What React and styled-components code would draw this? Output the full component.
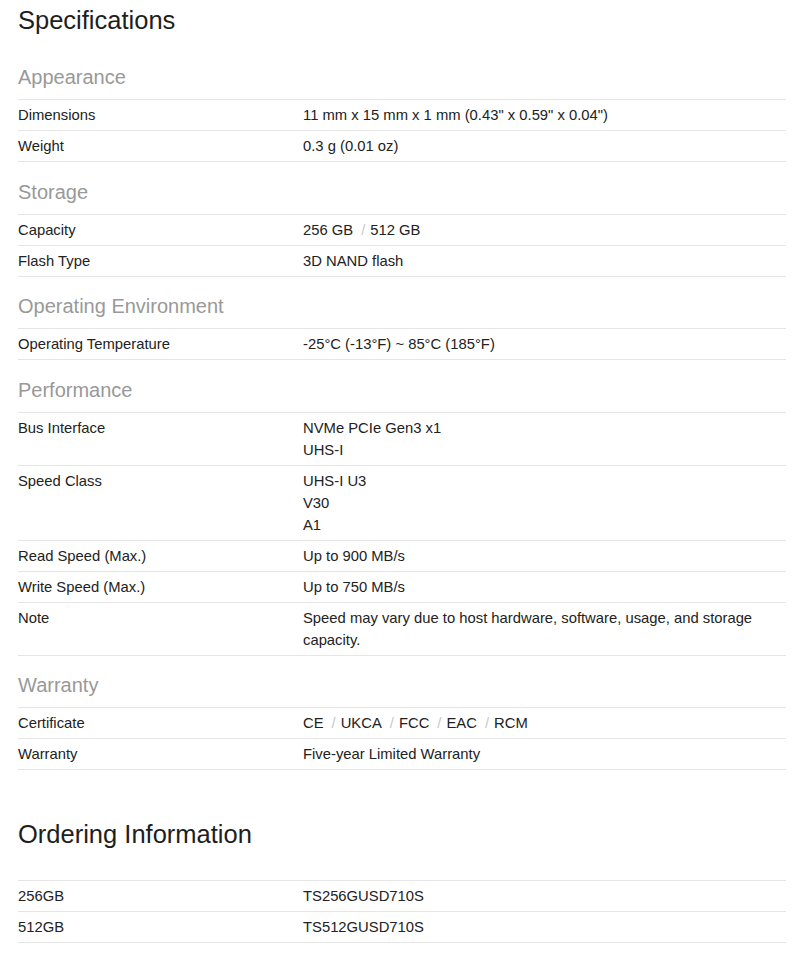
import React from "react";
import styled, { createGlobalStyle } from "styled-components";

const GlobalStyle = createGlobalStyle`
  body {
    margin: 0;
    background: #fff;
    font-family: "Liberation Sans", Arial, sans-serif;
    color: #222;
  }
`;

const specs = [
  {
    title: "Appearance",
    rows: [
      ["Dimensions", ['11 mm x 15 mm x 1 mm (0.43" x 0.59" x 0.04")']],
      ["Weight", ["0.3 g (0.01 oz)"]],
    ],
  },
  {
    title: "Storage",
    rows: [
      ["Capacity", [["256 GB", "512 GB"]]],
      ["Flash Type", ["3D NAND flash"]],
    ],
  },
  {
    title: "Operating Environment",
    rows: [["Operating Temperature", ["-25°C (-13°F) ~ 85°C (185°F)"]]],
  },
  {
    title: "Performance",
    rows: [
      ["Bus Interface", ["NVMe PCIe Gen3 x1", "UHS-I"]],
      ["Speed Class", ["UHS-I U3", "V30", "A1"]],
      ["Read Speed (Max.)", ["Up to 900 MB/s"]],
      ["Write Speed (Max.)", ["Up to 750 MB/s"]],
      [
        "Note",
        ["Speed may vary due to host hardware, software, usage, and storage capacity."],
      ],
    ],
  },
  {
    title: "Warranty",
    rows: [
      ["Certificate", [["CE", "UKCA", "FCC", "EAC", "RCM"]]],
      ["Warranty", ["Five-year Limited Warranty"]],
    ],
  },
];

const ordering = [
  ["256GB", ["TS256GUSD710S"]],
  ["512GB", ["TS512GUSD710S"]],
];

function SpecTable({ rows }) {
  return (
    <Table>
      {rows.map(([label, values]) => (
        <Row key={label}>
          <Label>{label}</Label>
          <Value>
            {values.map((v, i) =>
              Array.isArray(v) ? (
                <SlashList key={i}>
                  {v.map((item) => (
                    <li key={item}>{item}</li>
                  ))}
                </SlashList>
              ) : (
                <Line key={i}>{v}</Line>
              )
            )}
          </Value>
        </Row>
      ))}
    </Table>
  );
}

export default function App() {
  return (
    <Page>
      <GlobalStyle />
      <Title>Specifications</Title>
      {specs.map((s) => (
        <section key={s.title}>
          <SectionTitle>{s.title}</SectionTitle>
          <SpecTable rows={s.rows} />
        </section>
      ))}
      <Title $spaced>Ordering Information</Title>
      <SpecTable rows={ordering} />
    </Page>
  );
}

const Page = styled.div`
  padding: 4px 8px 20px 18px;
  width: 768px;
`;

const Title = styled.h2`
  margin: ${(p) => (p.$spaced ? "48px 0 30px" : "0 0 27px")};
  font-size: 25.5px;
  line-height: 32px;
  font-weight: 400;
  color: #1e1e1e;
`;

const SectionTitle = styled.h3`
  margin: 15.5px 0 8px;
  font-size: 20px;
  line-height: 28px;
  font-weight: 400;
  color: #999;
`;

const Table = styled.div`
  border-top: 1px solid #e6e6e6;
`;

const Row = styled.div`
  display: grid;
  grid-template-columns: 285px 1fr;
  padding: 4px 0;
  border-bottom: 1px solid #e6e6e6;
  font-size: 14.8px;
  line-height: 22px;
  color: #222;
`;

const Label = styled.div``;

const Value = styled.div``;

const Line = styled.div``;

const SlashList = styled.ul`
  list-style: none;
  margin: 0;
  padding: 0;
  display: flex;

  li + li::before {
    content: "/";
    color: #c8c8c8;
    padding: 0 5px 0 8px;
  }
`;
